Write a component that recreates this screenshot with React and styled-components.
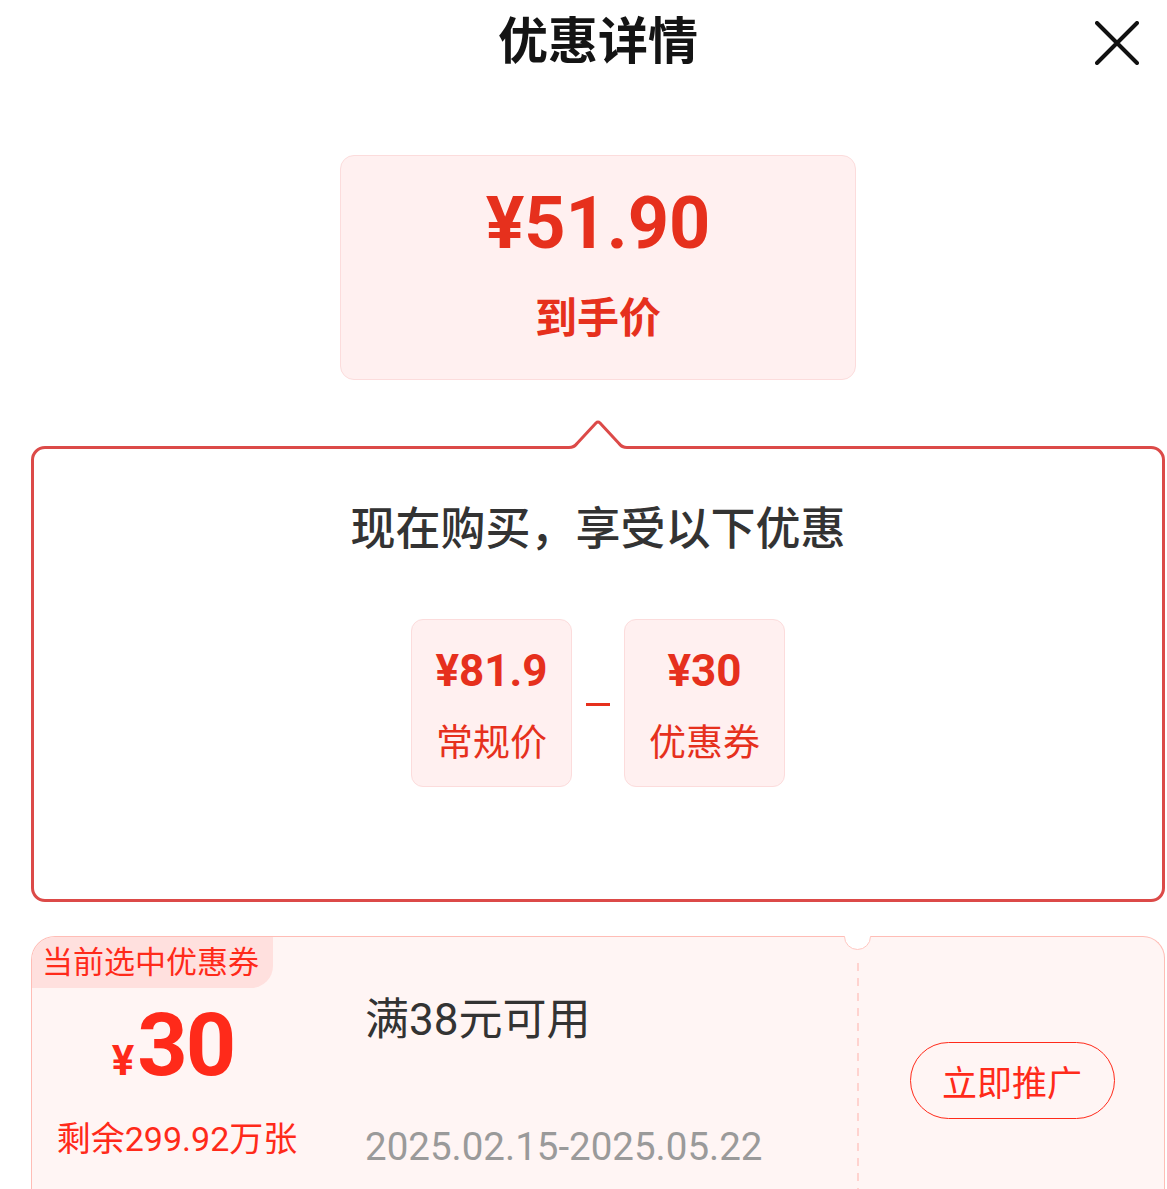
import React from "react";
import styled, { createGlobalStyle } from "styled-components";

const Global = createGlobalStyle`
  html, body { margin: 0; padding: 0; background: #fff; }
  body { font-family: Roboto, "Noto Sans CJK SC", "Noto Sans", sans-serif; }
  * { box-sizing: border-box; }
`;

const Page = styled.div`
  width: 1167px;
  height: 1189px;
  overflow: hidden;
  padding: 0 2px 0 31px;
`;

const Header = styled.header`
  height: 88px;
  padding-top: 7px;
  display: grid;
  grid-template-columns: 1fr auto 1fr;
  align-items: start;
`;

const Title = styled.h1`
  grid-column: 2;
  margin: 0;
  font-size: 50px;
  line-height: 60px;
  font-weight: 700;
  color: #141414;
  font-family: "Noto Sans CJK SC", sans-serif;
`;

const Close = styled.button`
  grid-column: 3;
  justify-self: end;
  margin: 14px 26px 0 0;
  width: 44px;
  height: 44px;
  padding: 0;
  border: 0;
  background: none;
  display: flex;
  align-items: center;
  justify-content: center;
`;

const PriceBox = styled.section`
  width: 516px;
  height: 225px;
  margin: 67px auto 0;
  background: #fff0f0;
  border: 1px solid #fcdcdc;
  border-radius: 14px;
  padding-top: 32px;
  display: flex;
  flex-direction: column;
  align-items: center;
  color: #e6301d;
`;

const BigPrice = styled.div`
  font-size: 72px;
  line-height: 1;
  font-weight: 700;
  font-family: Roboto, sans-serif;
`;

const PriceLabel = styled.div`
  margin-top: 30px;
  font-size: 42px;
  line-height: 1.2;
  font-weight: 700;
  font-family: "Noto Sans CJK SC", sans-serif;
`;

const Bubble = styled.section`
  position: relative;
  margin-top: 66px;
  border: 3px solid #dc4a48;
  border-radius: 14px;
  padding: 50px 0 112px;
  display: flex;
  flex-direction: column;
  align-items: center;
`;

const Notch = styled.svg`
  position: absolute;
  top: -30px;
  left: 50%;
  margin-left: -32px;
`;

const BubbleTitle = styled.h2`
  margin: 0;
  font-size: 45px;
  line-height: 53px;
  font-weight: 500;
  color: #333;
  font-family: "Noto Sans CJK SC", sans-serif;
`;

const Formula = styled.div`
  margin-top: 67px;
  display: flex;
  align-items: center;
  gap: 14px;
`;

const Part = styled.div`
  width: 161px;
  height: 168px;
  background: #fff0f0;
  border: 1px solid #fcdcdc;
  border-radius: 12px;
  padding-top: 29px;
  display: flex;
  flex-direction: column;
  align-items: center;
  color: #e6301d;
`;

const PartPrice = styled.div`
  font-size: 44px;
  line-height: 1;
  font-weight: 700;
  font-family: Roboto, sans-serif;
`;

const PartLabel = styled.div`
  margin-top: 25px;
  font-size: 37px;
  line-height: 1.2;
  font-family: "Noto Sans CJK SC", sans-serif;
`;

const Minus = styled.span`
  width: 24px;
  height: 3px;
  background: #e6301d;
  margin-top: 2px;
`;

const Coupon = styled.section`
  position: relative;
  margin-top: 34px;
  height: 300px;
  background: #fff5f4;
  border: 1px solid #ffbdb6;
  border-bottom: 0;
  border-radius: 24px 22px 0 0;
  display: grid;
  grid-template-columns: 290px 535px 2px 1fr;
`;

const Tag = styled.div`
  position: absolute;
  top: 0;
  left: 0;
  width: 241px;
  height: 51px;
  background: #ffe0de;
  border-radius: 23px 0 22px 0;
  color: #ff2a1a;
  font-size: 31px;
  line-height: 45px;
  padding-left: 10px;
  font-family: "Noto Sans CJK SC", sans-serif;
`;

const Hole = styled.span`
  position: absolute;
  top: -14px;
  left: 812px;
  width: 27px;
  height: 27px;
  border-radius: 50%;
  background: #fff;
  border: 1px solid #ffc7c1;
  clip-path: inset(13px -2px -2px -2px);
`;

const LeftCol = styled.div`
  padding-top: 64px;
  display: flex;
  flex-direction: column;
  align-items: center;
  color: #ff2a1a;
`;

const Amount = styled.div`
  display: flex;
  align-items: baseline;
  font-family: Roboto, sans-serif;
  font-weight: 700;
  line-height: 1;
  margin-left: -8px;
`;

const Yen = styled.span`
  font-size: 42px;
  margin-right: 3px;
`;

const AmountNum = styled.span`
  font-size: 88px;
  letter-spacing: -2px;
`;

const Remain = styled.div`
  margin-top: 30px;
  font-size: 34px;
  line-height: 1.2;
  font-family: Roboto, "Noto Sans CJK SC", sans-serif;
`;

const MidCol = styled.div`
  padding: 57px 0 0 43px;
  display: flex;
  flex-direction: column;
`;

const Condition = styled.div`
  font-size: 44px;
  line-height: 1.2;
  color: #333;
  font-family: Roboto, "Noto Sans CJK SC", sans-serif;
`;

const DateRange = styled.div`
  margin-top: 77px;
  font-size: 38.5px;
  line-height: 1.2;
  color: #9a9a9a;
  font-family: Roboto, sans-serif;
`;

const Divider = styled.div`
  margin-top: 26px;
  background: repeating-linear-gradient(to bottom, #ffd3cf 0 8px, transparent 8px 15px);
`;

const RightCol = styled.div`
  padding-top: 105px;
  display: flex;
  justify-content: center;
  align-items: flex-start;
`;

const Promote = styled.button`
  width: 205px;
  height: 77px;
  border: 1.5px solid #ff2a1a;
  border-radius: 40px;
  background: transparent;
  color: #ff2a1a;
  font-size: 35px;
  font-family: "Noto Sans CJK SC", sans-serif;
  padding: 0;
  margin-left: 1px;
`;

export default function App() {
  return (
    <>
      <Global />
      <Page>
        <Header>
          <Title>优惠详情</Title>
          <Close aria-label="关闭">
            <svg width="44" height="44" viewBox="0 0 44 44">
              <path d="M2 2 L42 42 M42 2 L2 42" stroke="#111" strokeWidth="4" strokeLinecap="round" />
            </svg>
          </Close>
        </Header>

        <PriceBox>
          <BigPrice>¥51.90</BigPrice>
          <PriceLabel>到手价</PriceLabel>
        </PriceBox>

        <Bubble>
          <Notch width="64" height="32" viewBox="0 0 64 32">
            <path d="M0 28.5 L3 28.5 Q8 28.5 11 24.5 L30 4 Q32 2 34 4 L53 24.5 Q56 28.5 61 28.5 L64 28.5 L64 32 L0 32 Z" fill="#fff" />
            <path d="M0 28.5 L3 28.5 Q8 28.5 11 24.5 L30 4 Q32 2 34 4 L53 24.5 Q56 28.5 61 28.5 L64 28.5" fill="none" stroke="#dc4a48" strokeWidth="3" strokeLinejoin="round" />
          </Notch>
          <BubbleTitle>现在购买，享受以下优惠</BubbleTitle>
          <Formula>
            <Part>
              <PartPrice>¥81.9</PartPrice>
              <PartLabel>常规价</PartLabel>
            </Part>
            <Minus />
            <Part>
              <PartPrice>¥30</PartPrice>
              <PartLabel>优惠券</PartLabel>
            </Part>
          </Formula>
        </Bubble>

        <Coupon>
          <Tag>当前选中优惠券</Tag>
          <Hole />
          <LeftCol>
            <Amount>
              <Yen>¥</Yen>
              <AmountNum>30</AmountNum>
            </Amount>
            <Remain>剩余299.92万张</Remain>
          </LeftCol>
          <MidCol>
            <Condition>满38元可用</Condition>
            <DateRange>2025.02.15-2025.05.22</DateRange>
          </MidCol>
          <Divider />
          <RightCol>
            <Promote>立即推广</Promote>
          </RightCol>
        </Coupon>
      </Page>
    </>
  );
}
